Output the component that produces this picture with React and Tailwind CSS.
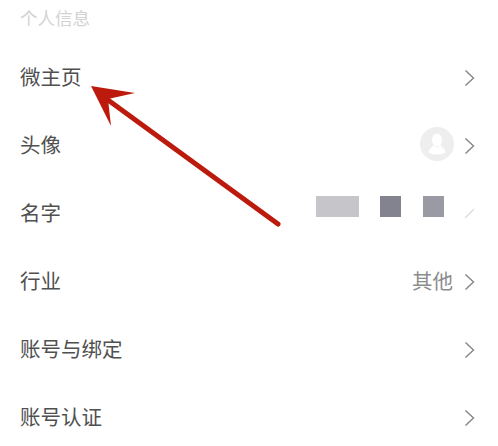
// Personal info settings list with a red annotation arrow on top.
const rows = [
  { label: "微主页" },
  { label: "头像", avatar: true },
  { label: "名字", blocks: true },
  { label: "行业", value: "其他" },
  { label: "账号与绑定" },
  { label: "账号认证" },
];

function Chevron() {
  return (
    <svg width="11" height="18" viewBox="0 0 11 18" fill="none" className="shrink-0">
      <path d="M1.5 1.5L9.5 9L1.5 16.5" stroke="#8a8a8a" strokeWidth="1.5" />
    </svg>
  );
}

function Avatar() {
  return (
    <div className="w-[34px] h-[34px] rounded-full bg-[#eeeeef] flex items-center justify-center mr-[10px] -mt-[4px]">
      <svg width="20" height="22" viewBox="0 0 20 22" fill="#ffffff">
        <ellipse cx="10" cy="7" rx="5" ry="6.5" />
        <path d="M7 12L3 16Q1 18 2 20Q10 23 18 20Q19 18 17 16L13 12L10 15Z" />
      </svg>
    </div>
  );
}

function Blocks() {
  return (
    <div className="flex items-center h-[21px] -mt-[16px]">
      <div className="w-[43px] h-[21px] bg-[#c6c6ca]" />
      <div className="w-[21px] h-[21px] bg-[#83838f] ml-[21px]" />
      <div className="w-[21px] h-[21px] bg-[#9a9aa4] ml-[22px]" />
      <svg width="11" height="12" viewBox="0 0 11 12" fill="none" className="ml-[20px] mt-[14px]">
        <path d="M1 11L10 2" stroke="#dcdcdc" strokeWidth="1.5" />
      </svg>
    </div>
  );
}

function Row({ row }) {
  return (
    <div className="h-[68px] flex items-center justify-between pl-[20px] pr-[23px]">
      <span className="text-[20.5px] text-[#505050] mb-[3px]">{row.label}</span>
      <div className="flex items-center">
        {row.avatar ? <Avatar /> : null}
        {row.value ? <span className="text-[20.5px] text-[#8c8c8c] mr-[11px] mb-[3px]">{row.value}</span> : null}
        {row.blocks ? <Blocks /> : <Chevron />}
      </div>
    </div>
  );
}

export default function App() {
  return (
    <div
      className="relative w-[498px] h-[446px] overflow-hidden bg-white"
      style={{ fontFamily: '"Noto Sans CJK SC", sans-serif' }}
    >
      <div className="h-[44px] pl-[20px] pt-[6px] text-[17.5px] leading-[24px] text-[#d2d2d2]">个人信息</div>
      {rows.map((row) => (
        <Row key={row.label} row={row} />
      ))}
      {/* annotation arrow */}
      <svg width="498" height="446" viewBox="0 0 498 446" className="absolute left-0 top-0 pointer-events-none">
        <path d="M278 224L108 100" stroke="#bb1a0c" strokeWidth="5" strokeLinecap="round" />
        <path d="M91 86L135 93L108 99L111 126Z" fill="#bb1a0c" />
      </svg>
    </div>
  );
}
